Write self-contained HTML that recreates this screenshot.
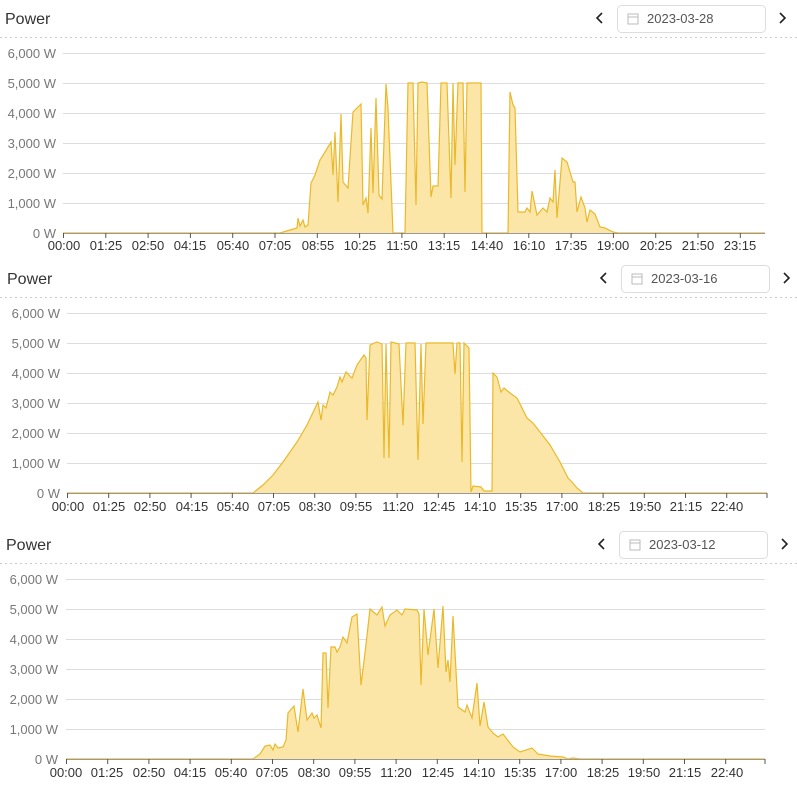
<!DOCTYPE html>
<html><head><meta charset="utf-8"><style>
body{margin:0;background:#fff;font-family:"Liberation Sans",sans-serif;}
svg{display:block}
text{font-family:"Liberation Sans",sans-serif}
</style></head><body>
<svg width="797" height="797" viewBox="0 0 797 797" xmlns="http://www.w3.org/2000/svg">
<defs>
<g id="cal"><rect x="0" y="0" width="10" height="10" fill="none" stroke="#bbb" stroke-width="1"/><line x1="0" y1="3" x2="10" y2="3" stroke="#bbb"/></g>
</defs>

<!-- Chart 1 -->
<text x="5" y="24" font-size="16" fill="#333">Power</text>
<line x1="0" y1="37.5" x2="797" y2="37.5" stroke="#ccc" stroke-dasharray="2,3"/>
<path d="M602 13 L597 18 L602 23" fill="none" stroke="#222" stroke-width="1.6"/>
<path d="M780 13 L785 18 L780 23" fill="none" stroke="#222" stroke-width="1.6"/>
<rect x="617.5" y="5.5" width="148" height="27" rx="4" fill="#fff" stroke="#ddd"/>
<use href="#cal" x="628" y="14"/>
<text x="647" y="23" font-size="13" fill="#555">2023-03-28</text>
<g stroke="#ddd" stroke-width="1">
<line x1="63" y1="53.5" x2="765" y2="53.5"/><line x1="63" y1="83.5" x2="765" y2="83.5"/><line x1="63" y1="113.5" x2="765" y2="113.5"/><line x1="63" y1="143.5" x2="765" y2="143.5"/><line x1="63" y1="173.5" x2="765" y2="173.5"/><line x1="63" y1="203.5" x2="765" y2="203.5"/>
</g>
<g font-size="13" fill="#777" text-anchor="end">
<text x="56" y="58">6,000 W</text><text x="56" y="88">5,000 W</text><text x="56" y="118">4,000 W</text><text x="56" y="148">3,000 W</text><text x="56" y="178">2,000 W</text><text x="56" y="208">1,000 W</text><text x="56" y="238">0 W</text>
</g>
<path fill="#fbe6a8" stroke="#eab92a" stroke-width="1.2" d="M63 233 L280 233 L290 230 L297 228 L298 218 L300 226 L303 220 L305 227 L308 225 L311 183 L315 175 L320 160 L325 152 L331 142 L333 175 L335 132 L338 202 L341 114 L343 182 L348 188 L353 112 L357 108 L361 104 L363 205 L366 198 L368 213 L371 128 L373 193 L376 98 L379 195 L382 199 L386 84 L388 108 L393 233 L405 233 L408 83 L413 83 L416 205 L418 83 L422 82 L427 83 L431 197 L433 186 L438 186 L441 83 L447 83 L451 198 L453 83 L455 165 L458 83 L463 83 L465 192 L467 83 L481 83 L482 233 L508 233 L510 92 L513 105 L515 108 L518 212 L525 212 L527 208 L530 212 L532 191 L537 215 L543 208 L547 212 L550 198 L553 202 L555 170 L557 218 L562 158 L567 162 L573 182 L575 182 L577 212 L581 197 L585 208 L587 222 L590 210 L595 214 L600 227 L605 228 L613 232 L618 233 L765 233"/>
<line x1="63" y1="233.5" x2="765" y2="233.5" stroke="#999"/>
<g stroke="#555" id="t1">
<line x1="63.5" y1="233" x2="63.5" y2="238"/><line x1="105.8" y1="233" x2="105.8" y2="238"/><line x1="148.1" y1="233" x2="148.1" y2="238"/><line x1="190.4" y1="233" x2="190.4" y2="238"/><line x1="232.7" y1="233" x2="232.7" y2="238"/><line x1="275" y1="233" x2="275" y2="238"/><line x1="317.3" y1="233" x2="317.3" y2="238"/><line x1="359.6" y1="233" x2="359.6" y2="238"/><line x1="401.9" y1="233" x2="401.9" y2="238"/><line x1="444.2" y1="233" x2="444.2" y2="238"/><line x1="486.5" y1="233" x2="486.5" y2="238"/><line x1="528.8" y1="233" x2="528.8" y2="238"/><line x1="571.1" y1="233" x2="571.1" y2="238"/><line x1="613.4" y1="233" x2="613.4" y2="238"/><line x1="655.7" y1="233" x2="655.7" y2="238"/><line x1="698" y1="233" x2="698" y2="238"/><line x1="740.3" y1="233" x2="740.3" y2="238"/>
</g>
<g font-size="13" fill="#333" text-anchor="middle">
<text x="64" y="250">00:00</text><text x="106" y="250">01:25</text><text x="148" y="250">02:50</text><text x="190" y="250">04:15</text><text x="233" y="250">05:40</text><text x="275" y="250">07:05</text><text x="318" y="250">08:55</text><text x="360" y="250">10:25</text><text x="402" y="250">11:50</text><text x="444" y="250">13:15</text><text x="487" y="250">14:40</text><text x="529" y="250">16:10</text><text x="571" y="250">17:35</text><text x="613" y="250">19:00</text><text x="656" y="250">20:25</text><text x="698" y="250">21:50</text><text x="740" y="250">23:15</text>
</g>

<!-- Chart 2 -->
<text x="7" y="284" font-size="16" fill="#333">Power</text>
<line x1="0" y1="297.5" x2="797" y2="297.5" stroke="#ccc" stroke-dasharray="2,3"/>
<path d="M606 273 L601 278 L606 283" fill="none" stroke="#222" stroke-width="1.6"/>
<path d="M784 273 L789 278 L784 283" fill="none" stroke="#222" stroke-width="1.6"/>
<rect x="621.5" y="265.5" width="148" height="27" rx="4" fill="#fff" stroke="#ddd"/>
<use href="#cal" x="632" y="274"/>
<text x="651" y="283" font-size="13" fill="#555">2023-03-16</text>
<g stroke="#ddd">
<line x1="67" y1="313.5" x2="767" y2="313.5"/><line x1="67" y1="343.5" x2="767" y2="343.5"/><line x1="67" y1="373.5" x2="767" y2="373.5"/><line x1="67" y1="403.5" x2="767" y2="403.5"/><line x1="67" y1="433.5" x2="767" y2="433.5"/><line x1="67" y1="463.5" x2="767" y2="463.5"/>
</g>
<g font-size="13" fill="#777" text-anchor="end">
<text x="60" y="318">6,000 W</text><text x="60" y="348">5,000 W</text><text x="60" y="378">4,000 W</text><text x="60" y="408">3,000 W</text><text x="60" y="438">2,000 W</text><text x="60" y="468">1,000 W</text><text x="60" y="498">0 W</text>
</g>
<path fill="#fbe6a8" stroke="#eab92a" stroke-width="1.2" d="M67 493 L253 493 L263 485 L273 475 L283 462 L297 442 L307 425 L318 402 L321 420 L323 405 L326 408 L330 392 L333 395 L337 387 L340 377 L342 382 L346 372 L352 378 L357 365 L364 355 L366 358 L367 420 L370 345 L377 342 L382 344 L384 458 L386 344 L389 458 L391 342 L399 344 L403 425 L406 343 L415 343 L418 460 L421 344 L423 424 L426 343 L453 343 L455 374 L457 343 L460 343 L462 462 L464 343 L469 348 L471 492 L473 486 L481 487 L484 491 L492 491 L493 373 L497 377 L501 392 L504 388 L510 393 L517 398 L522 408 L527 418 L533 423 L540 432 L550 445 L560 462 L568 478 L572 482 L577 488 L583 493 L767 493"/>
<line x1="67" y1="493.5" x2="767" y2="493.5" stroke="#999"/>
<g font-size="13" fill="#333" text-anchor="middle">
<text x="68" y="511">00:00</text><text x="109" y="511">01:25</text><text x="150" y="511">02:50</text><text x="192" y="511">04:15</text><text x="233" y="511">05:40</text><text x="274" y="511">07:05</text><text x="315" y="511">08:30</text><text x="356" y="511">09:55</text><text x="398" y="511">11:20</text><text x="439" y="511">12:45</text><text x="480" y="511">14:10</text><text x="521" y="511">15:35</text><text x="562" y="511">17:00</text><text x="604" y="511">18:25</text><text x="645" y="511">19:50</text><text x="686" y="511">21:15</text><text x="727" y="511">22:40</text>
</g>
<g stroke="#555">
<line x1="67.5" y1="493" x2="67.5" y2="498"/><line x1="108.7" y1="493" x2="108.7" y2="498"/><line x1="149.9" y1="493" x2="149.9" y2="498"/><line x1="191.1" y1="493" x2="191.1" y2="498"/><line x1="232.3" y1="493" x2="232.3" y2="498"/><line x1="273.5" y1="493" x2="273.5" y2="498"/><line x1="314.7" y1="493" x2="314.7" y2="498"/><line x1="355.9" y1="493" x2="355.9" y2="498"/><line x1="397.1" y1="493" x2="397.1" y2="498"/><line x1="438.3" y1="493" x2="438.3" y2="498"/><line x1="479.5" y1="493" x2="479.5" y2="498"/><line x1="520.7" y1="493" x2="520.7" y2="498"/><line x1="561.9" y1="493" x2="561.9" y2="498"/><line x1="603.1" y1="493" x2="603.1" y2="498"/><line x1="644.3" y1="493" x2="644.3" y2="498"/><line x1="685.5" y1="493" x2="685.5" y2="498"/><line x1="726.7" y1="493" x2="726.7" y2="498"/><line x1="767" y1="493" x2="767" y2="498"/>
</g>

<!-- Chart 3 -->
<text x="6" y="550" font-size="16" fill="#333">Power</text>
<line x1="0" y1="563.5" x2="797" y2="563.5" stroke="#ccc" stroke-dasharray="2,3"/>
<path d="M604 539 L599 544 L604 549" fill="none" stroke="#222" stroke-width="1.6"/>
<path d="M782 539 L787 544 L782 549" fill="none" stroke="#222" stroke-width="1.6"/>
<rect x="619.5" y="531.5" width="148" height="27" rx="4" fill="#fff" stroke="#ddd"/>
<use href="#cal" x="630" y="540"/>
<text x="649" y="549" font-size="13" fill="#555">2023-03-12</text>
<g stroke="#ddd">
<line x1="66" y1="579.5" x2="765" y2="579.5"/><line x1="66" y1="609.5" x2="765" y2="609.5"/><line x1="66" y1="639.5" x2="765" y2="639.5"/><line x1="66" y1="669.5" x2="765" y2="669.5"/><line x1="66" y1="699.5" x2="765" y2="699.5"/><line x1="66" y1="729.5" x2="765" y2="729.5"/>
</g>
<g font-size="13" fill="#777" text-anchor="end">
<text x="58" y="584">6,000 W</text><text x="58" y="614">5,000 W</text><text x="58" y="644">4,000 W</text><text x="58" y="674">3,000 W</text><text x="58" y="704">2,000 W</text><text x="58" y="734">1,000 W</text><text x="58" y="764">0 W</text>
</g>
<path fill="#fbe6a8" stroke="#eab92a" stroke-width="1.2" d="M66 759 L253 759 L260 754 L265 746 L270 745 L273 750 L275 744 L278 748 L283 747 L286 740 L288 713 L294 706 L298 732 L303 689 L307 720 L312 713 L314 718 L317 715 L321 728 L323 653 L326 653 L328 708 L331 647 L335 647 L337 652 L340 647 L343 637 L347 643 L352 617 L357 614 L361 685 L365 653 L370 609 L377 615 L382 607 L385 626 L390 615 L397 610 L402 615 L405 609 L417 610 L419 614 L421 685 L424 609 L428 655 L434 609 L438 668 L443 606 L446 672 L448 660 L450 682 L453 616 L458 707 L465 712 L467 705 L472 718 L477 683 L480 726 L484 702 L488 727 L493 733 L498 737 L503 734 L513 747 L520 752 L532 748 L538 754 L550 756 L563 757 L568 759 L573 758 L580 759 L765 759"/>
<line x1="66" y1="759.5" x2="765" y2="759.5" stroke="#999"/>
<g font-size="13" fill="#333" text-anchor="middle">
<text x="66" y="777">00:00</text><text x="107" y="777">01:25</text><text x="149" y="777">02:50</text><text x="190" y="777">04:15</text><text x="231" y="777">05:40</text><text x="272" y="777">07:05</text><text x="314" y="777">08:30</text><text x="355" y="777">09:55</text><text x="396" y="777">11:20</text><text x="438" y="777">12:45</text><text x="479" y="777">14:10</text><text x="520" y="777">15:35</text><text x="561" y="777">17:00</text><text x="603" y="777">18:25</text><text x="644" y="777">19:50</text><text x="685" y="777">21:15</text><text x="727" y="777">22:40</text>
</g>
<g stroke="#555">
<line x1="66.5" y1="759" x2="66.5" y2="764"/><line x1="107.7" y1="759" x2="107.7" y2="764"/><line x1="148.9" y1="759" x2="148.9" y2="764"/><line x1="190.1" y1="759" x2="190.1" y2="764"/><line x1="231.3" y1="759" x2="231.3" y2="764"/><line x1="272.5" y1="759" x2="272.5" y2="764"/><line x1="313.7" y1="759" x2="313.7" y2="764"/><line x1="354.9" y1="759" x2="354.9" y2="764"/><line x1="396.1" y1="759" x2="396.1" y2="764"/><line x1="437.3" y1="759" x2="437.3" y2="764"/><line x1="478.5" y1="759" x2="478.5" y2="764"/><line x1="519.7" y1="759" x2="519.7" y2="764"/><line x1="560.9" y1="759" x2="560.9" y2="764"/><line x1="602.1" y1="759" x2="602.1" y2="764"/><line x1="643.3" y1="759" x2="643.3" y2="764"/><line x1="684.5" y1="759" x2="684.5" y2="764"/><line x1="725.7" y1="759" x2="725.7" y2="764"/><line x1="765" y1="759" x2="765" y2="764"/>
</g>
</svg>
</body></html>
